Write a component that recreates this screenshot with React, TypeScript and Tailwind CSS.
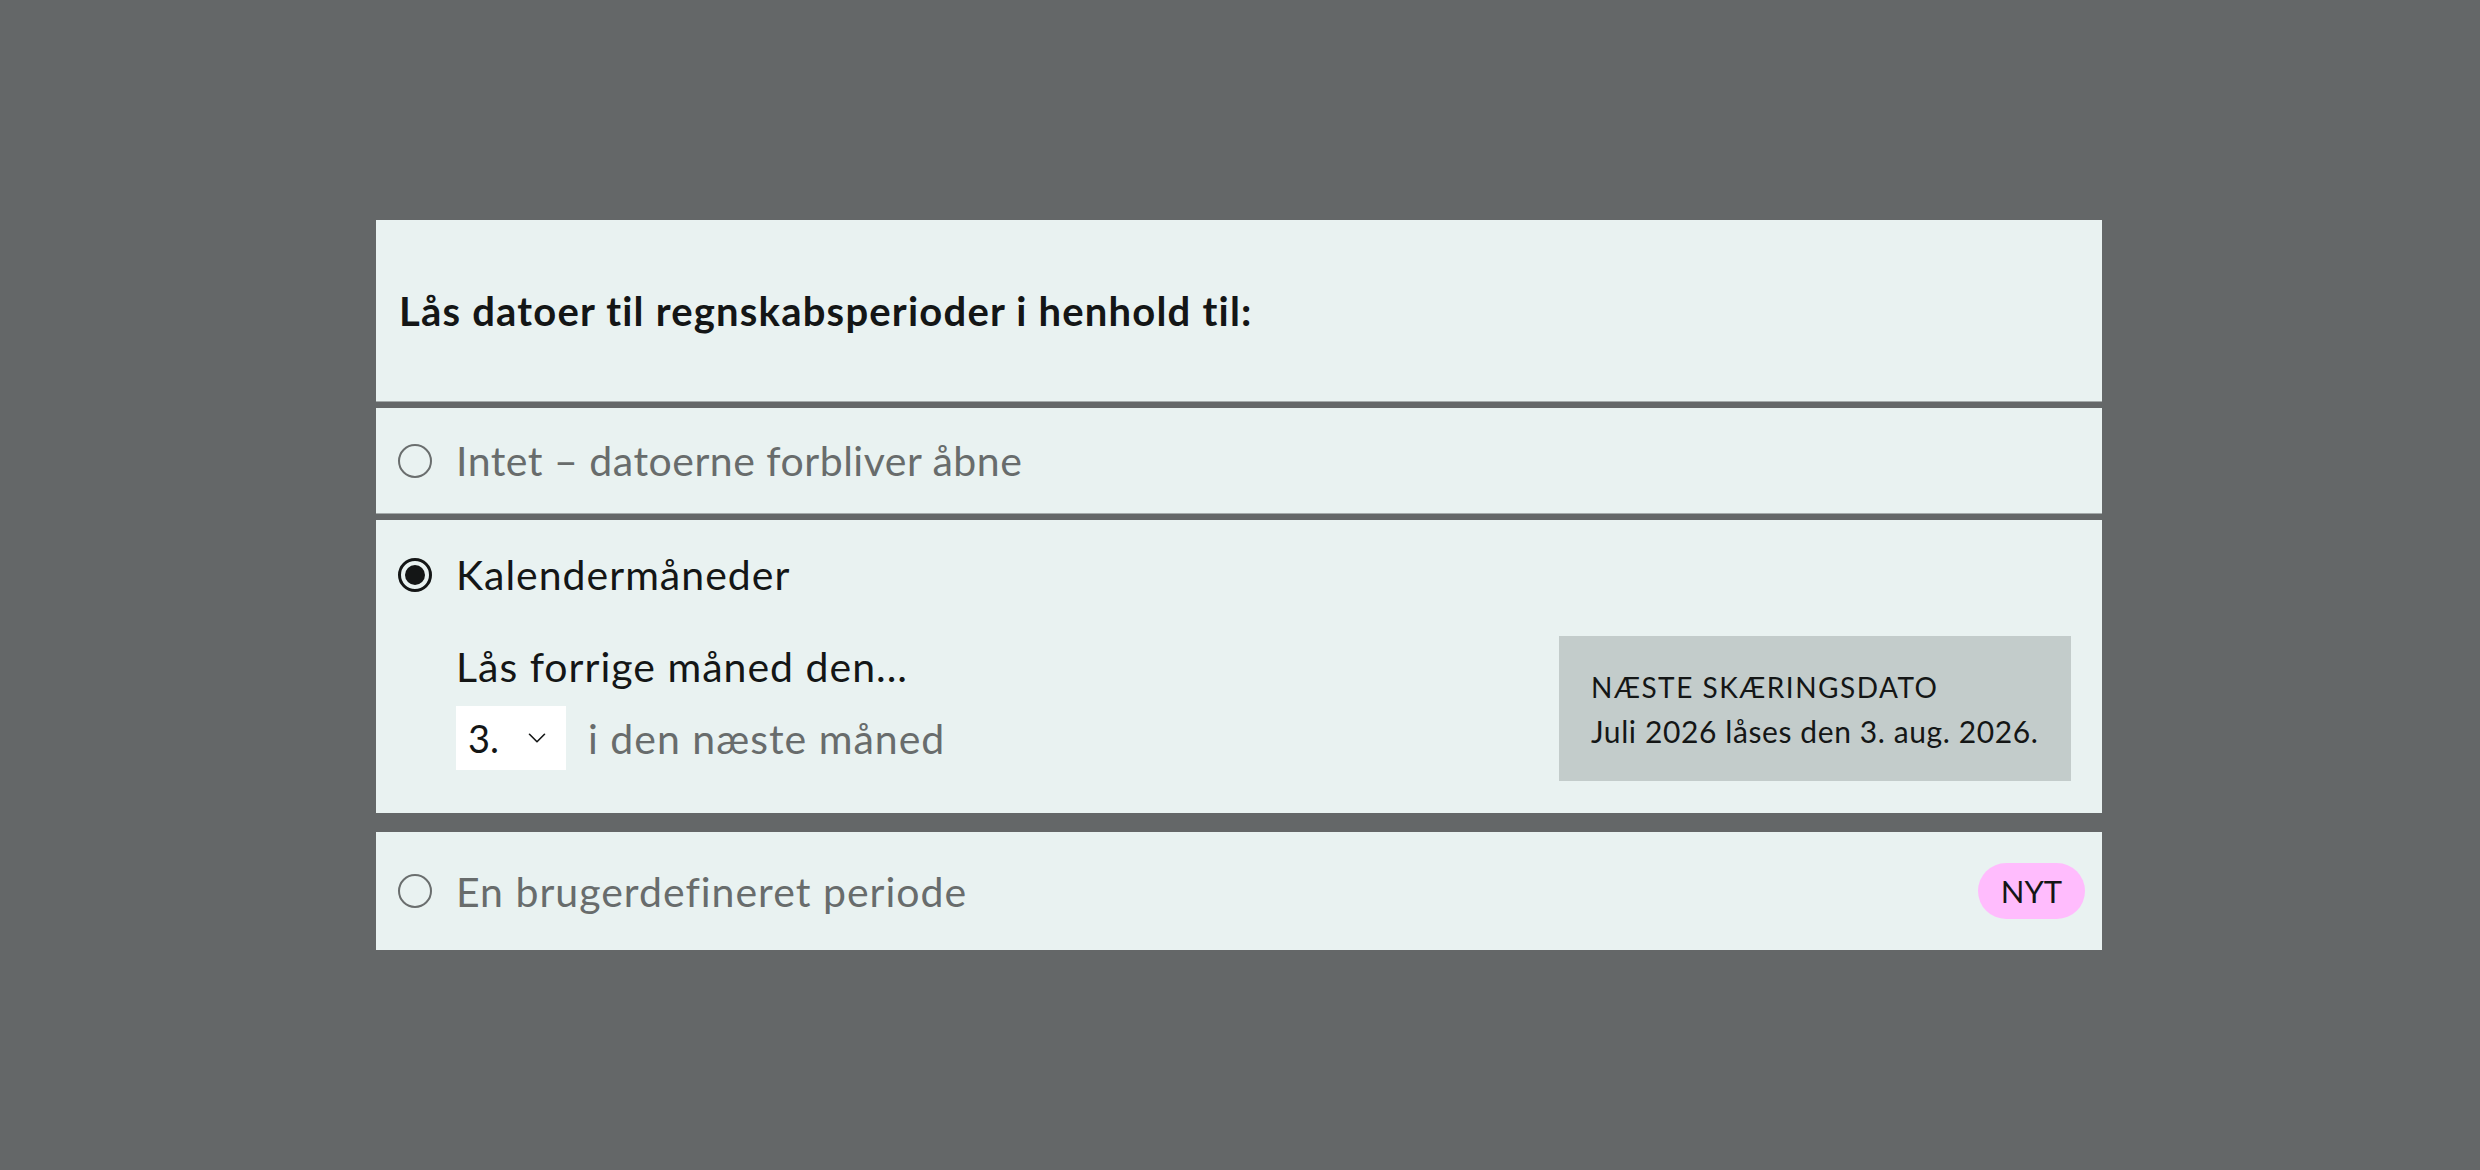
import { ChevronDown } from "lucide-react";

const font = { fontFamily: "Lato, 'Noto Sans', sans-serif" };

const Radio = ({ checked = false }: { checked?: boolean }) =>
  checked ? (
    <span className="flex h-[34px] w-[34px] shrink-0 items-center justify-center rounded-full border-[3px] border-[#141616]">
      <span className="h-[20px] w-[20px] rounded-full bg-[#141616]" />
    </span>
  ) : (
    <span className="h-[34px] w-[34px] shrink-0 rounded-full border-2 border-[#6a6e6e]" />
  );

export default function App() {
  return (
    <div className="min-h-screen bg-[#646768] pt-[220px] pl-[376px]" style={font}>
      <div className="flex w-[1726px] flex-col">
        {/* header */}
        <div className="flex h-[182px] items-center border-b border-[#a3a9a9] bg-[#e9f2f1] px-[23px]">
          <h2 className="text-[40px] font-bold leading-none tracking-[1.2px] text-[#141616]">
            Lås datoer til regnskabsperioder i henhold til:
          </h2>
        </div>

        {/* option: none */}
        <div className="mt-[6px] flex h-[106px] items-center gap-[24px] border-b border-[#a3a9a9] bg-[#e9f2f1] px-[22px]">
          <Radio />
          <span className="text-[41px] leading-none tracking-[0.5px] text-[#686c6c]">Intet – datoerne forbliver åbne</span>
        </div>

        {/* option: calendar months */}
        <div className="mt-[6px] flex flex-col bg-[#e9f2f1] pt-[26px] pb-[32px] pl-[22px] pr-[31px]">
          <div className="flex h-[57px] items-center gap-[24px]">
            <Radio checked />
            <span className="text-[41px] leading-none tracking-[1px] text-[#141616]">Kalendermåneder</span>
          </div>
          <div className="mt-[33px] flex items-start justify-between">
            <div className="ml-[58px] flex flex-col pt-[2px]">
              <div className="flex h-[57px] items-center text-[41px] tracking-[1px] text-[#141616]">Lås forrige måned den...</div>
              <div className="mt-[11px] flex items-center gap-[22px]">
                <div className="flex h-[64px] w-[110px] items-center justify-between bg-white pl-[12px] pr-[14px]">
                  <span className="text-[38px] leading-none text-[#141616]">3.</span>
                  <ChevronDown className="h-[30px] w-[30px] text-[#141616]" strokeWidth={1.3} />
                </div>
                <span className="text-[41px] leading-none tracking-[1px] text-[#686c6c]">i den næste måned</span>
              </div>
            </div>
            <div className="flex h-[145px] w-[512px] flex-col justify-center bg-[#c3cccb] px-[32px]">
              <div className="text-[28px] leading-[44px] tracking-[1.5px] uppercase text-[#141616]">Næste skæringsdato</div>
              <div className="text-[30px] leading-[44px] tracking-[0.6px] text-[#141616]">Juli 2026 låses den 3. aug. 2026.</div>
            </div>
          </div>
        </div>

        {/* option: custom */}
        <div className="mt-[19px] flex h-[118px] items-center gap-[24px] bg-[#e9f2f1] pl-[22px] pr-[17px]">
          <Radio />
          <span className="text-[41px] leading-none tracking-[1px] text-[#686c6c]">En brugerdefineret periode</span>
          <span className="ml-auto flex h-[56px] w-[107px] items-center justify-center rounded-full bg-[#ffbcfd] text-[31px] text-[#141616]">
            NYT
          </span>
        </div>
      </div>
    </div>
  );
}
